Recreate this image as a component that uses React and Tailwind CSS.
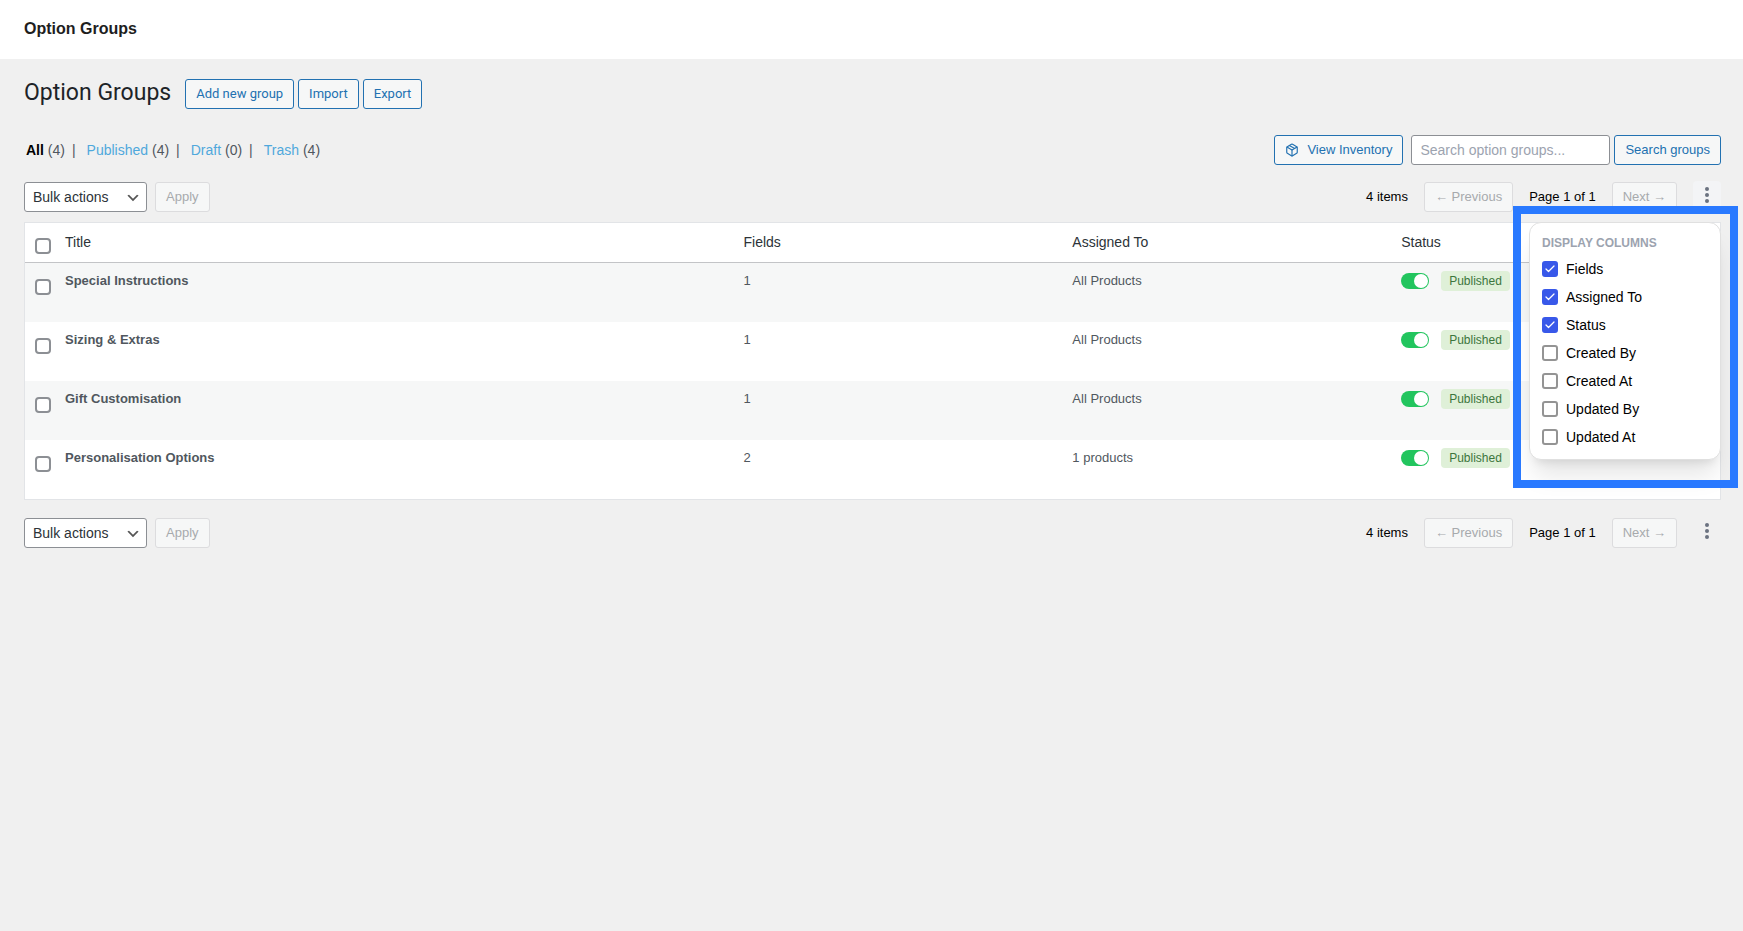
import { useState } from 'react';
import { Check, Package } from 'lucide-react';

const FILTERS = [
    { label: 'All', count: 4 },
    { label: 'Published', count: 4 },
    { label: 'Draft', count: 0 },
    { label: 'Trash', count: 4 },
];

const GROUPS = [
    { title: 'Special Instructions', fields: 1, assigned: 'All Products' },
    { title: 'Sizing & Extras', fields: 1, assigned: 'All Products' },
    { title: 'Gift Customisation', fields: 1, assigned: 'All Products' },
    { title: 'Personalisation Options', fields: 2, assigned: '1 products' },
];

const COLUMNS = ['Fields', 'Assigned To', 'Status', 'Created By', 'Created At', 'Updated By', 'Updated At'];

const primaryBtn =
    'flex h-[30px] items-center rounded-[3px] border border-[#2271b1] bg-[#f6f7f7] px-2.5 text-[13px] text-[#2271b1] hover:bg-[#f0f0f1]';
const disabledBtn =
    'flex h-[30px] items-center rounded-[3px] border border-[#dcdcde] bg-[#f6f7f7] px-2.5 text-[13px] text-[#a7aaad]';

const RowCheckbox = ({ label }) => (
    <input
        type="checkbox"
        aria-label={label}
        className="block size-4 appearance-none rounded-[4px] border-2 border-[#8c8f94] bg-white checked:bg-[#3858e9]"
    />
);

const ColumnMenu = () => {
    const [visible, setVisible] = useState(['Fields', 'Assigned To', 'Status']);

    const toggle = (name) => {
        setVisible(visible.includes(name) ? visible.filter((v) => v !== name) : [...visible, name]);
    };

    return (
        <div className="absolute top-[41px] right-0 z-10 w-48 rounded-xl border border-[#e0e0e0] bg-white px-3 py-2 shadow-xl">
            <div className="text-[12px] leading-6 font-bold text-[#9ca3af] uppercase">Display Columns</div>
            {COLUMNS.map((name) => (
                <label key={name} className="flex h-7 items-center gap-2 text-[14px] text-black">
                    <span className="relative block size-4">
                        <input
                            type="checkbox"
                            checked={visible.includes(name)}
                            onChange={() => toggle(name)}
                            className="peer block size-4 appearance-none rounded-[3px] border-2 border-[#949494] bg-white checked:border-[#3858e9] checked:bg-[#3858e9]"
                        />
                        <Check className="pointer-events-none absolute inset-0 m-auto hidden size-3 text-white peer-checked:block" strokeWidth={2.5} />
                    </span>
                    {name}
                </label>
            ))}
            {/* highlight frame around the open menu */}
            <div className="pointer-events-none absolute -top-[17px] -right-[18px] -bottom-[29px] -left-[17px] border-8 border-[#2979ff]" />
        </div>
    );
};

const TableNav = ({ id, menuOpen }) => (
    <div className="flex items-center justify-between">
        <div className="flex gap-2">
            <div className="relative">
                <select
                    id={id}
                    aria-label="Bulk actions"
                    className="h-[30px] w-[123px] appearance-none rounded-[3px] border border-[#8c8f94] bg-white pl-2 text-[14px] text-[#2c3338]"
                >
                    <option>Bulk actions</option>
                </select>
                <svg viewBox="0 0 20 20" className="pointer-events-none absolute top-2 right-1.5 size-4 fill-[#555]">
                    <path d="M5 6l5 5 5-5 2 1-7 7-7-7 2-1z" />
                </svg>
            </div>
            <button disabled className={disabledBtn}>Apply</button>
        </div>
        <div className="flex items-center gap-4 text-[13px] text-black">
            <span>4 items</span>
            <button disabled className={disabledBtn}>← Previous</button>
            <span>Page 1 of 1</span>
            <button disabled className={disabledBtn}>Next →</button>
            <div className="relative h-8">
                <button
                    aria-label="Display columns"
                    className={`flex h-7 w-7 items-center justify-center rounded ${menuOpen ? 'bg-[#f3f4f6]' : ''}`}
                >
                    <svg viewBox="0 0 16 16" className="size-4 fill-[#6b7280]">
                        <circle cx="8" cy="2" r="2" />
                        <circle cx="8" cy="8" r="2" />
                        <circle cx="8" cy="14" r="2" />
                    </svg>
                </button>
                {menuOpen && <ColumnMenu />}
            </div>
        </div>
    </div>
);

const StatusToggle = ({ label }) => (
    <label className="relative block h-4 w-7">
        <input type="checkbox" role="switch" defaultChecked aria-label={label} className="peer block h-4 w-7 appearance-none rounded-full bg-[#d1d5db] checked:bg-[#22c55e]" />
        <span className="pointer-events-none absolute top-px left-px size-3.5 rounded-full bg-white peer-checked:left-[13px]" />
    </label>
);

const App = () => (
    <div className="min-h-screen bg-[#f0f0f0] font-['Liberation_Sans',Arial,sans-serif] text-[#50575e]">
        <header className="flex h-[59px] items-center bg-white px-6 pb-0.5">
            <div className="text-[16px] font-bold text-[#1e1e1e]">Option Groups</div>
        </header>

        <main className="px-[22px] pt-5 pl-6">
            <div className="flex items-center gap-1 font-[Roboto,sans-serif]">
                <h1 className="mr-2.5 pb-0.5 text-[23px] leading-7 text-[#1d2327]">Option Groups</h1>
                <button className={primaryBtn}>Add new group</button>
                <button className={primaryBtn}>Import</button>
                <button className={primaryBtn}>Export</button>
            </div>

            <div className="mt-[26px] flex items-center justify-between">
                <ul className="flex items-center pl-0.5 text-[14px]">
                    {FILTERS.map((f, i) => (
                        <li key={f.label}>
                            <a href="#" className={i === 0 ? 'font-bold text-black' : 'text-[#4fa8dc]'}>{f.label}</a>{' '}
                            ({f.count})
                            {i < FILTERS.length - 1 && <span className="mr-[11px] ml-[7px]">|</span>}
                        </li>
                    ))}
                </ul>
                <div className="flex items-center gap-1">
                    <button className={`${primaryBtn} mr-1 gap-2`}>
                        <Package className="size-3.5" />
                        View Inventory
                    </button>
                    <input
                        type="search"
                        aria-label="Search option groups"
                        placeholder="Search option groups..."
                        className="h-[30px] w-[199px] rounded-[3px] border border-[#8c8f94] bg-white px-2 text-[14px] placeholder:text-[#9ca3af]"
                    />
                    <button className={primaryBtn}>Search groups</button>
                </div>
            </div>

            <div className="mt-4 mb-[9px]">
                <TableNav id="bulk-top" menuOpen />
            </div>

            <div className="border border-[#e2e4e7] bg-white">
                <table className="w-full table-fixed border-separate border-spacing-0 text-left text-[13px] leading-5">
                    <thead>
                        <tr className="h-10 align-top text-[14px] text-[#2c3338]">
                            <th className="w-[30px] border-b border-[#c3c4c7] pt-[15px] pl-2.5"><RowCheckbox label="Select all" /></th>
                            <th className="border-b border-[#c3c4c7] px-2.5 pt-[9px] font-normal">Title</th>
                            <th className="w-[19.4%] border-b border-[#c3c4c7] px-2.5 pt-[9px] font-normal">Fields</th>
                            <th className="w-[19.4%] border-b border-[#c3c4c7] px-2.5 pt-[9px] font-normal">Assigned To</th>
                            <th className="w-[19.4%] border-b border-[#c3c4c7] px-2.5 pt-[9px] font-normal">Status</th>
                        </tr>
                    </thead>
                    <tbody>
                        {GROUPS.map((g) => (
                            <tr key={g.title} className="h-[59px] align-top odd:bg-[#f6f7f7]">
                                <td className="pt-4 pl-2.5"><RowCheckbox label={`Select ${g.title}`} /></td>
                                <td className="px-2.5 pt-2 font-bold">{g.title}</td>
                                <td className="px-2.5 pt-2">{g.fields}</td>
                                <td className="px-2.5 pt-2">{g.assigned}</td>
                                <td className="px-2.5 pt-2">
                                    <div className="flex items-center gap-3">
                                        <StatusToggle label={`${g.title} status`} />
                                        <span className="rounded bg-[#dff0d8] px-2 text-[12px] leading-5 text-[#3c763d]">Published</span>
                                    </div>
                                </td>
                            </tr>
                        ))}
                    </tbody>
                </table>
            </div>

            <div className="mt-[17px]">
                <TableNav id="bulk-bottom" />
            </div>
        </main>
    </div>
);

export default App;
